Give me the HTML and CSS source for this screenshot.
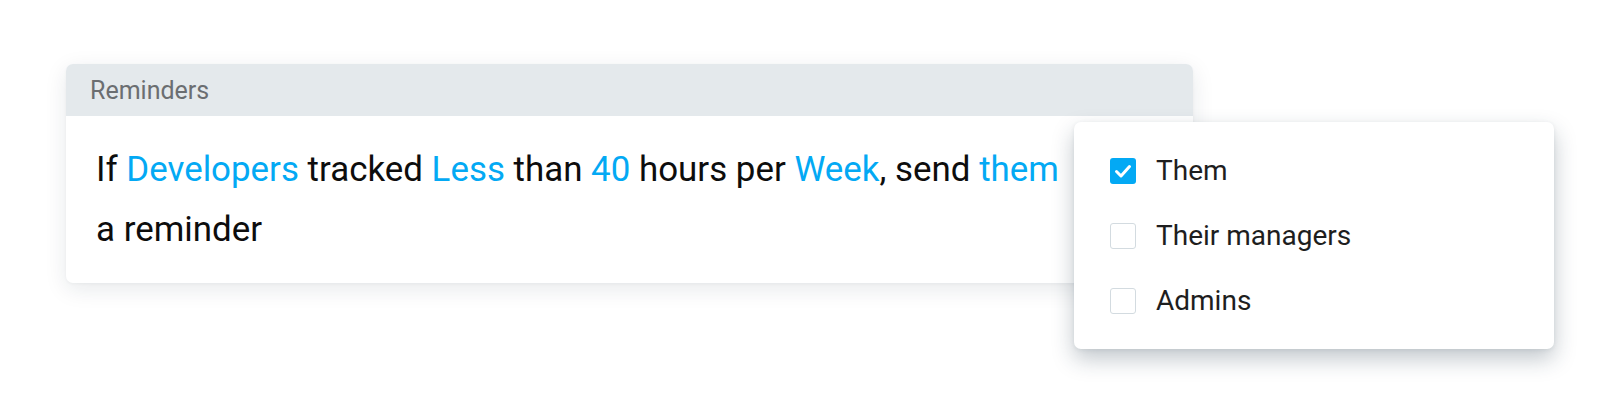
FILE: index.html
```html
<!DOCTYPE html>
<html lang="en">
<head>
<meta charset="utf-8">
<title>Reminders</title>
<link rel="stylesheet" href="styles.css">
</head>
<body>
<div class="stage">
  <section class="card">
    <header class="card-head">Reminders</header>
    <div class="card-body">
      <p class="rule">If <span class="tok">Developers</span> tracked <span class="tok">Less</span> than <span class="tok">40</span> hours per <span class="tok">Week</span>, send <span class="tok">them</span> a reminder</p>
    </div>
  </section>
  <div class="menu">
    <div class="opt">
      <span class="box checked">
        <svg viewBox="0 0 26 26" width="26" height="26"><path d="M6.5 13.5 L11 18 L19.5 8.5" fill="none" stroke="#fff" stroke-width="3" stroke-linecap="round" stroke-linejoin="round"/></svg>
      </span>
      <span class="label">Them</span>
    </div>
    <div class="opt">
      <span class="box"></span>
      <span class="label">Their managers</span>
    </div>
    <div class="opt">
      <span class="box"></span>
      <span class="label">Admins</span>
    </div>
  </div>
</div>
</body>
</html>
```
FILE: styles.css
```css
* { box-sizing: border-box; }
html, body {
  margin: 0;
  padding: 0;
  background: #ffffff;
  font-family: Roboto, "Liberation Sans", Arial, sans-serif;
}
.stage {
  position: relative;
  width: 1618px;
  height: 414px;
  padding: 64px 0 0 66px;
}
.card {
  width: 1127px;
  border-radius: 7px;
  background: #fff;
  overflow: hidden;
  box-shadow: 0 6px 22px rgba(20, 40, 60, 0.10), 0 1px 3px rgba(20, 40, 60, 0.04);
}
.card-head {
  height: 52px;
  display: flex;
  align-items: center;
  padding-left: 24px;
  background: #e4e9ec;
  color: #6b6e71;
  font-size: 25px;
}
.card-body {
  padding: 24px 30px 23px 30px;
}
.rule {
  margin: 0;
  max-width: 978px;
  font-size: 34.9px;
  line-height: 60px;
  color: #0d0d0d;
}
.tok { color: #03a9f4; }
.menu {
  position: absolute;
  left: 1074px;
  top: 122px;
  width: 480px;
  height: 227px;
  padding: 16px 36px;
  background: #fff;
  border-radius: 7px;
  box-shadow: 0 10px 22px rgba(30, 50, 70, 0.27), 0 1px 4px rgba(30, 50, 70, 0.08);
}
.opt {
  height: 65px;
  display: flex;
  align-items: center;
  gap: 20px;
}
.box {
  width: 26px;
  height: 26px;
  flex: none;
  border: 1.5px solid #d3dbe0;
  border-radius: 3px;
  background: #fff;
  display: flex;
}
.box.checked {
  border: none;
  background: #03a9f4;
}
.label {
  font-size: 28px;
  color: #1e1e1e;
}
```
